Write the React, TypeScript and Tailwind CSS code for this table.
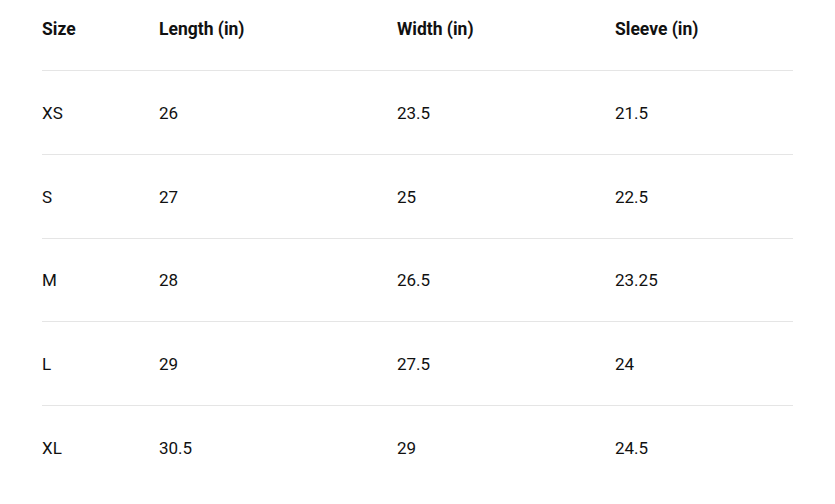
const rows = [
  ["XS", "26", "23.5", "21.5"],
  ["S", "27", "25", "22.5"],
  ["M", "28", "26.5", "23.25"],
  ["L", "29", "27.5", "24"],
  ["XL", "30.5", "29", "24.5"],
];

const headers = ["Size", "Length (in)", "Width (in)", "Sleeve (in)"];

export default function App() {
  return (
    <div className="min-h-screen bg-white pl-[42px] pr-[42px] font-['Roboto',sans-serif] text-[17px] text-[#111]">
      <div className="grid w-[751px] grid-cols-[117px_238px_218px_178px] border-b border-[#e5e5e5] pt-[19px] pb-[31px] text-[17.5px] font-bold">
        {headers.map((h) => (
          <div key={h} className="leading-5">{h}</div>
        ))}
      </div>
      {rows.map((r, i) => (
        <div
          key={r[0]}
          className={`grid h-[83.75px] w-[751px] grid-cols-[117px_238px_218px_178px] items-center ${i < rows.length - 1 ? "border-b border-[#e5e5e5]" : ""}`}
        >
          {r.map((c, j) => (
            <div key={j} className="leading-5 pt-px">{c}</div>
          ))}
        </div>
      ))}
    </div>
  );
}
